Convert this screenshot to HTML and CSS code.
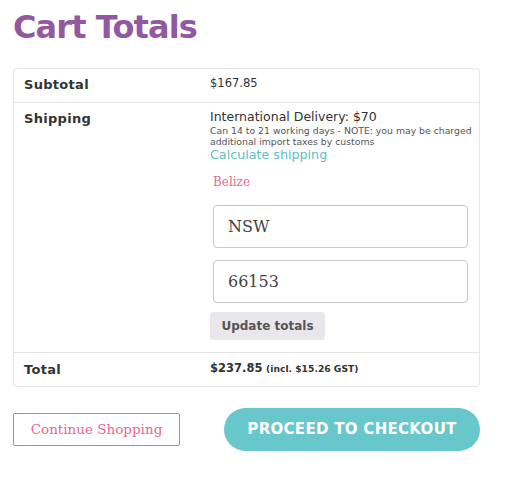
FILE: index.html
```html
<!DOCTYPE html>
<html>
<head>
<meta charset="utf-8">
<link rel="stylesheet" href="styles.css">
</head>
<body>
<div class="wrap">
  <h2 class="title">Cart Totals</h2>
  <div class="totals">
    <div class="row">
      <div class="label">Subtotal</div>
      <div class="value sub">$167.85</div>
    </div>
    <div class="row">
      <div class="label">Shipping</div>
      <div class="value ship">
        <div class="method">International Delivery: $70</div>
        <div class="note">Can 14 to 21 working days - NOTE: you may be charged additional import taxes by customs</div>
        <a class="calc">Calculate shipping</a>
        <div class="country">Belize</div>
        <div class="field">NSW</div>
        <div class="field">66153</div>
        <button class="update">Update totals</button>
      </div>
    </div>
    <div class="row last">
      <div class="label">Total</div>
      <div class="value total"><strong>$237.85</strong> <small>(incl. $15.26 GST)</small></div>
    </div>
  </div>
  <div class="actions">
    <a class="continue">Continue Shopping</a>
    <a class="checkout">PROCEED TO CHECKOUT</a>
  </div>
</div>
</body>
</html>
```
FILE: styles.css
```css
html, body { margin: 0; padding: 0; background: #fff; }
body { font-family: "DejaVu Sans", "Open Sans", sans-serif; color: #333; }
.wrap { padding: 7px 29px 0 13px; }
.title {
  margin: 0 0 21px 0;
  font-size: 32px;
  line-height: 40px;
  font-weight: bold;
  color: #9259a1;
  letter-spacing: -0.9px;
}
.totals {
  border: 1px solid #e6e6e6;
  border-radius: 4px;
  width: 465px;
}
.row { display: grid; grid-template-columns: 196px 1fr; border-bottom: 1px solid #e6e6e6; }
.row.last { border-bottom: none; }
.label {
  padding: 8px 0 0 10px;
  font-size: 13px;
  font-weight: bold;
  color: #333;
  line-height: 16px;
  letter-spacing: 0.3px;
}
.row:first-child { height: 33px; }
.row:first-child .label { padding-top: 8px; }
.row.last { height: 33px; }
.row.last .label { padding-top: 9px; }
.value { font-size: 11.5px; line-height: 16px; }
.sub { padding-top: 6px; }
.ship { padding: 6px 0 12px 0; }
.method { font-size: 12.5px; color: #333; line-height: 16px; }
.note { font-size: 9.3px; line-height: 10.5px; color: #555; margin-top: 1px; }
.calc { display: block; font-size: 12.7px; line-height: 16px; color: #5cc0c4; }
.country {
  font-family: "DejaVu Serif", serif;
  font-size: 12px;
  color: #e56b90;
  margin: 11px 0 0 3px;
  line-height: 16px;
}
.field {
  margin: 15px 0 0 3px;
  width: 239px;
  height: 41px;
  border: 1px solid #c8c8c8;
  border-radius: 4px;
  padding: 0 0 0 14px;
  font-family: "DejaVu Serif", serif;
  font-size: 16px;
  line-height: 41px;
  color: #444;
}
.field + .field { margin-top: 12px; }
.update {
  display: block;
  margin-top: 9px;
  width: 115px;
  height: 28px;
  border: none;
  border-radius: 3px;
  background: #e9e7ec;
  font-family: "DejaVu Sans", sans-serif;
  font-size: 12px;
  font-weight: bold;
  color: #555;
  padding: 0;
}
.total { padding-top: 7px; }
.total strong { font-size: 11.5px; color: #333; }
.total small { font-size: 9.2px; font-weight: bold; color: #333; }
.actions {
  display: flex;
  align-items: center;
  margin-top: 21px;
  gap: 44px;
}
.continue {
  display: block;
  box-sizing: border-box;
  width: 167px;
  height: 33px;
  border-width: 1px;
  border-style: solid;
  border-color: #ea6a92;
  border-radius: 2px;
  text-align: center;
  line-height: 31px;
  font-family: "DejaVu Serif", serif;
  font-size: 13.5px;
  color: #e8668f;
}
.checkout {
  display: block;
  width: 256px;
  height: 43px;
  border-radius: 22px;
  background: #68c7ca;
  color: #fff;
  text-align: center;
  line-height: 43px;
  font-size: 15px;
  font-weight: bold;
  letter-spacing: 0.3px;
}
```
